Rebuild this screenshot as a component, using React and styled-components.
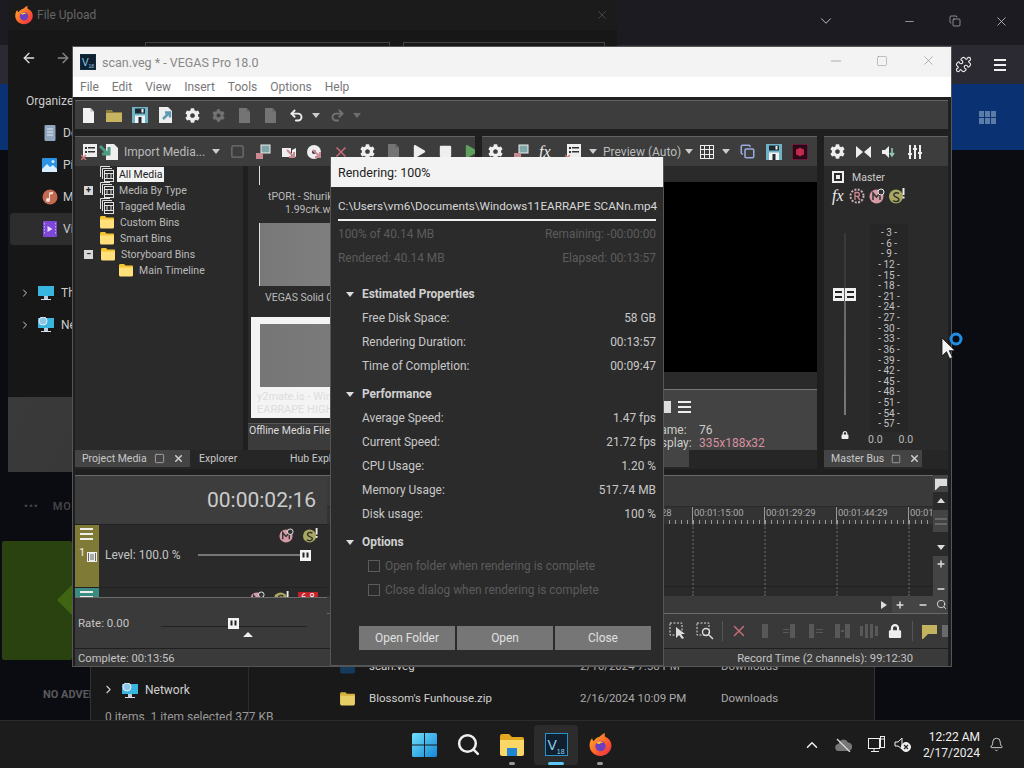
import React from "react";
import styled, { createGlobalStyle } from "styled-components";
import { FaCog, FaLock, FaPlay, FaStop } from "react-icons/fa";
import { Undo2, Redo2, X, Minus, Plus, Square, ChevronDown, ChevronUp, ChevronRight, ArrowLeft, ArrowRight, Bell, Search, Copy, Puzzle } from "lucide-react";

const GlobalStyle = createGlobalStyle`
  html, body {
    margin: 0;
    background: #0a0c12;
    overflow: hidden;
  }
  * {
    box-sizing: border-box;
  }
`;

/* little drawings */
const FirefoxIcon = ({ size = 20 }) => (
  <svg width={size} height={size} viewBox="0 0 24 24">
    <defs>
      <linearGradient id="ff" x1="0" y1="0" x2="1" y2="1">
        <stop offset="0" stopColor="#ffb52e" />
        <stop offset="0.6" stopColor="#ff5a2b" />
        <stop offset="1" stopColor="#e6274f" />
      </linearGradient>
    </defs>
    <path d="M12 23C6 23 1.500 18.500 1.500 13c0-3 1-5.500 2.500-7 .2 1.400.8 2.200 1.600 2.800C6.600 6.500 9 5 11 4.600 13 2.800 15 1.500 16.500 1c-.6 1.400-.6 2.600 0 3.500 3.700 1.600 6 4.600 6 8.500 0 5.500-4.500 10-10.500 10z" fill="url(#ff)" />
    <circle cx="12" cy="13.500" r="5" fill="#6a3fc0" />
    <path d="M8 10c2-1.500 5-1.500 7 .5-1.500-.3-3 0-4 1-1 .4-2-.3-3-1.500z" fill="#ffb52e" />
  </svg>
);

const FolderIcon = ({ size = 16, top = "#f4c430", body = "#ffe07a" }) => (
  <svg width={size} height={size} viewBox="0 0 16 16">
    <path d="M1 3.500 C1 2.500 1.500 2 2.500 2 H6 L7.500 3.500 H14 C14.700 3.500 15 4 15 4.500 V6 H1z" fill={top} />
    <path d="M1 5.500 H15 V13 C15 13.800 14.500 14.500 13.500 14.500 H2.500 C1.500 14.500 1 13.800 1 13z" fill={body} />
  </svg>
);

const LibraryIcon = ({ kind }) => (
  <svg width="16" height="16" viewBox="0 0 16 16">
    {kind === "doc" && (
      <g>
        <rect x="2.500" y="0" width="11" height="16" rx="1" fill="#8fa6be" />
        <path d="M5 4h6M5 7h6M5 10h6" stroke="#e4ecf4" strokeWidth="1" />
      </g>
    )}
    {kind === "pic" && (
      <g>
        <rect x="0" y="1" width="15" height="14" rx="1" fill="#2a93e6" />
        <path d="M0 12l5-5 3 3 3-2 4 4v3H0z" fill="#d6eeff" />
        <circle cx="11" cy="4.500" r="1.500" fill="#d6eeff" />
      </g>
    )}
    {kind === "music" && (
      <g>
        <circle cx="8" cy="8" r="7.500" fill="#c46a50" />
        <path d="M7 3.500l4-.5v2l-3 .4V11a2 2 0 1 1-1-1.700z" fill="#f2e2dc" />
      </g>
    )}
    {kind === "video" && (
      <g>
        <rect x="1" y="0" width="14" height="16" rx="1" fill="#7d48d6" />
        <path d="M5.500 5v6l5-3z" fill="#eadcff" />
        <path d="M2.500 2v12M13.500 2v12" stroke="#c6a6ff" strokeDasharray="1.500 1.500" />
      </g>
    )}
  </svg>
);

const BinIcon = () => (
  <svg width="14" height="16" viewBox="0 0 14 16" fill="none" stroke="#e2e2e2" strokeWidth="1">
    <path d="M.500 11V.500H10" />
    <path d="M2.500 13V2.500H12" />
    <rect x="4.500" y="4.500" width="9" height="11" fill="#2a2a2a" />
    <path d="M4.500 7.500h9M4.500 12.500h9M7 8v4M11 8v4" />
  </svg>
);

const NewDocIcon = () => (
  <svg width="13" height="15" viewBox="0 0 13 15">
    <path d="M1 0h7.500L12 3.500V15H1z" fill="#f2f2f2" />
    <path d="M8.500 0v3.500H12" fill="#bbb" />
  </svg>
);

const OpenFolderIcon = () => (
  <svg width="16" height="13" viewBox="0 0 16 13">
    <path d="M0 1h6l1 2h9v10H0z" fill="#8d7f3f" />
    <path d="M0 4h16v9H0z" fill="#c7b463" />
  </svg>
);

const FloppyIcon = () => (
  <svg width="16" height="16" viewBox="0 0 16 16">
    <rect width="16" height="16" fill="#6fb3c6" />
    <rect x="3" y="1.500" width="10" height="5" fill="#1e2a30" />
    <rect x="9.500" y="2" width="2" height="3.500" fill="#f2f2f2" />
    <rect x="3" y="8.500" width="10" height="7.500" fill="#f2f2f2" />
    <rect x="6.500" y="10" width="3" height="6" fill="#1e2a30" />
  </svg>
);

const ExportIcon = () => (
  <svg width="16" height="16" viewBox="0 0 16 16">
    <path d="M1 0h9l4 4v12H1z" fill="#eee" />
    <path d="M5 12l6-6M7 5.500h5v5" stroke="#5b9ab0" strokeWidth="2.500" fill="none" />
  </svg>
);

const PropsIcon = () => (
  <svg width="16" height="16" viewBox="0 0 16 16">
    <rect x="2" y="0" width="14" height="13" fill="#eee" />
    <path d="M4 3h2v2H4zM7 3h7v1.500H7zM4 7h2v2H4zM7 7h7v1.500H7z" fill="#333" />
    <path d="M0 11l5 5M5 11l-5 5" stroke="#c77" strokeWidth="1.500" />
  </svg>
);

const ImportIcon = () => (
  <svg width="20" height="18" viewBox="0 0 20 18">
    <path d="M7 1h8l4 4v12H7z" fill="#eee" />
    <path d="M1 3l9 9M3 11h7V4" stroke="#4f9a85" strokeWidth="3" fill="none" />
  </svg>
);

const PinkTileIcon = ({ variant }) => (
  <svg width="16" height="16" viewBox="0 0 16 16">
    {variant === "a" && <rect x="6" y="1" width="9" height="8" fill="#7fa6a8" stroke="#eee" />}
    {variant === "a" && <rect x="1" y="9" width="7" height="6" fill="#c98a92" />}
    {variant === "b" && <path d="M1 4h9v9H1zM11 6l4-2v9l-4-2z" fill="#eee" />}
    {variant === "c" && <circle cx="7" cy="8" r="7" fill="#eee" />}
    {variant === "c" && <circle cx="7" cy="8" r="2" fill="#333" />}
    {variant !== "a" && <path d="M6 6l7 7M13 8v5H8" stroke="#c98a92" strokeWidth="2" fill="none" />}
  </svg>
);

const RedRecordIcon = () => (
  <svg width="16" height="16" viewBox="0 0 16 16">
    <rect width="16" height="16" fill="#2a0a18" stroke="#a0304f" />
    <path d="M8 3.500l4 2.200v4.600l-4 2.200-4-2.200V5.700z" fill="#c2294e" />
  </svg>
);

const MuteBadge = ({ size = 16 }) => (
  <svg width={size} height={size} viewBox="0 0 16 16">
    <circle cx="7.500" cy="8.500" r="7" fill="#d69aa6" />
    <path d="M4 12V5l3.500 4L11 5v7" stroke="#333" strokeWidth="1.500" fill="none" />
    <circle cx="12" cy="4" r="3" fill="#333" stroke="#eee" />
  </svg>
);

const SoloBadge = ({ size = 16 }) => (
  <svg width={size} height={size} viewBox="0 0 16 16">
    <circle cx="7" cy="8.500" r="7" fill="#a9a860" />
    <path d="M10 5.500C8 4 4 5 5 7.500s5 1.500 5 4-4 2.500-6 1" stroke="#333" strokeWidth="1.500" fill="none" />
    <rect x="13.500" y="0" width="2" height="7" fill="#eee" />
    <rect x="13.500" y="8.500" width="2" height="2" fill="#eee" />
  </svg>
);

const FxBadge = () => (
  <svg width="16" height="16" viewBox="0 0 16 16">
    <circle cx="8" cy="8" r="6.500" fill="none" stroke="#c9aeb4" strokeWidth="2" strokeDasharray="2 1.400" />
    <path d="M6 12V4.500h2.500a1.800 1.800 0 0 1 0 3.800H6M8.500 8.500L11 12" stroke="#c98a92" strokeWidth="1.300" fill="none" />
  </svg>
);

const MasterSquare = () => (
  <svg width="12" height="12" viewBox="0 0 12 12">
    <path d="M0 0h12v12H0zM2 2v8h8V2z" fill="#eee" fillRule="evenodd" />
    <rect x="4" y="4" width="4" height="4" fill="#eee" />
  </svg>
);

const HamburgerIcon = ({ width = 13 }) => (
  <svg width={width} height="12" viewBox="0 0 13 12" preserveAspectRatio="none">
    <path d="M0 0h13v2H0zM0 5h13v2H0zM0 10h13v2H0z" fill="#eee" />
  </svg>
);

const SliderKnob = () => (
  <svg width="11" height="11" viewBox="0 0 11 11">
    <rect width="11" height="11" fill="#f4f4f4" />
    <rect x="2.500" y="2.500" width="2" height="5" fill="#222" />
    <rect x="6.500" y="2.500" width="2" height="5" fill="#222" />
  </svg>
);

const FilmIcon = () => (
  <svg width="10" height="10" viewBox="0 0 10 10">
    <rect width="10" height="10" fill="#eee" />
    <path d="M1.500 1v8M8.500 1v8M3 3h4M3 5h4M3 7h4" stroke="#666" strokeWidth="1" />
  </svg>
);

const BracketIcon = ({ kind }) => (
  <svg width="22" height="18" viewBox="0 0 22 18" opacity="0.28" fill="#aaa">
    {kind === 0 && <path d="M8 2h6v14H8z" />}
    {kind === 1 && <path d="M10 2h5v14h-5zM3 7h6v1H3zM3 10h6v1H3z" />}
    {kind === 2 && <path d="M3 2h5v14H3zM10 7h7v1h-7zM10 10h7v1h-7z" />}
    {kind === 3 && <path d="M3 2h5v14H3zM13 2h5v14h-5zM9 8h3v2H9z" />}
    {kind === 4 && <path d="M2 4h3v10H2zM7 2h3v14H7zM12 2h3v14h-3zM17 4h3v10h-3z" />}
  </svg>
);

const SelectionIcon = ({ zoom }) => (
  <svg width="18" height="18" viewBox="0 0 18 18" fill="none">
    <rect x="1" y="1" width="12" height="12" stroke="#ddd" strokeDasharray="2 1.500" />
    {zoom ? (
      <g stroke="#ddd" strokeWidth="1.400">
        <circle cx="10" cy="10" r="3.500" />
        <path d="M13 13l4 4" />
      </g>
    ) : (
      <path d="M7 5v11l3-3 3 4 2-1-3-4h4z" fill="#ddd" />
    )}
  </svg>
);

const NoteIcon = ({ size = 15, fill = "#c4b35e" }) => (
  <svg width={size} height={size} viewBox="0 0 15 15">
    <path d="M0 1h15v9H6l-5 5H0z" fill={fill} />
  </svg>
);

const WindowsLogo = () => (
  <svg width="25" height="24" viewBox="0 0 25 24">
    <defs>
      <linearGradient id="win" x1="0" y1="0" x2="1" y2="1">
        <stop offset="0" stopColor="#6fe0fa" />
        <stop offset="1" stopColor="#1387d8" />
      </linearGradient>
    </defs>
    <path d="M0 1.500A1.500 1.500 0 0 1 1.500 0H12v11.500H0zM13 0h10.500A1.500 1.500 0 0 1 25 1.500v10H13zM0 12.500h12V24H1.500A1.500 1.500 0 0 1 0 22.500zM13 12.500h12v10a1.500 1.500 0 0 1-1.500 1.500H13z" fill="url(#win)" />
  </svg>
);

const ExplorerTaskIcon = () => (
  <svg width="24" height="22" viewBox="0 0 24 22">
    <path d="M0 2a2 2 0 0 1 2-2h7l3 3h10a2 2 0 0 1 2 2v3H0z" fill="#e2a81f" />
    <path d="M0 6h24v14a2 2 0 0 1-2 2H2a2 2 0 0 1-2-2z" fill="#fad766" />
    <rect x="7" y="14" width="10" height="8" fill="#1f86d6" />
  </svg>
);

const VegasLogo = ({ size, frame = "#2b8fc9" }) => (
  <LogoBox $size={size} $frame={frame}>
    V<small>18</small>
  </LogoBox>
);

const MonitorIcon = ({ globe }) => (
  <svg width="16" height="16" viewBox="0 0 16 16">
    <rect x="0" y="1" width="16" height="10" fill="#39b6e0" />
    <rect x="6" y="11" width="4" height="3" fill="#bcd" />
    <rect x="3" y="14" width="10" height="1" fill="#dde" />
    {globe && <circle cx="5" cy="4" r="4" fill="#8fc3e8" stroke="#e5eef5" />}
  </svg>
);

const CursorBusy = () => (
  <svg width="26" height="32" viewBox="0 0 26 32">
    <path d="M2 10v18l4.500-4.300 3.200 7 2.800-1.200-3.200-6.800H15z" fill="#f4f4f4" stroke="#111" strokeWidth="0.800" />
    <circle cx="16" cy="11" r="5" fill="none" stroke="#1f8fe6" strokeWidth="3" />
  </svg>
);

/* desktop and windows placed on it */
const Desktop = styled.div`
  position: relative;
  width: 1024px;
  height: 768px;
  overflow: hidden;
  background: #0a0c12;
  font-family: Roboto, "Liberation Sans", sans-serif;
  font-size: 12px;
  color: #ccc;
`;

const Win = styled.div`
  position: absolute;
  left: ${(p) => p.$x}px;
  top: ${(p) => p.$y}px;
  width: ${(p) => p.$w}px;
  height: ${(p) => p.$h}px;
  display: flex;
  flex-direction: column;
  overflow: hidden;
`;

const LogoBox = styled.span`
  display: inline-flex;
  align-items: center;
  justify-content: center;
  flex: none;
  width: ${(p) => p.$size}px;
  height: ${(p) => p.$size}px;
  background: #10202f;
  border: 1px solid ${(p) => p.$frame};
  color: #8fd0f0;
  font-family: "Liberation Sans", sans-serif;
  font-size: ${(p) => Math.round(p.$size * 0.62)}px;
  small {
    font-size: ${(p) => Math.round(p.$size * 0.3)}px;
    align-self: flex-end;
  }
`;

/* firefox window in the back */
const BrowserTop = styled.div`
  height: 45px;
  background: #1c1b22;
  display: flex;
  align-items: center;
  justify-content: flex-end;
  color: #d4d4d8;
`;

const CaptionSlot = styled.span`
  width: 46px;
  margin-right: ${(p) => p.$gap || 0}px;
  display: flex;
  justify-content: center;
  margin-top: -3px;
`;

const BrowserNav = styled.div`
  height: 39px;
  background: #2b2a33;
  display: flex;
  align-items: center;
  justify-content: flex-end;
  gap: 22px;
  padding-right: 18px;
  color: #e8e8e8;
`;

const BlueBand = styled.div`
  height: 66px;
  background: #0a3272;
  display: flex;
  align-items: center;
  justify-content: flex-end;
  padding-right: 28px;
`;

const TileGrid = styled.div`
  display: grid;
  grid-template-columns: repeat(3, 5px);
  grid-auto-rows: 6px;
  gap: 1px;
  span {
    background: #5c7ca8;
  }
`;

const PageBody = styled.div`
  flex: 1;
  padding-top: 350px;
  display: flex;
  flex-direction: column;
  color: #444;
`;

const MoreRow = styled.div`
  display: flex;
  gap: 14px;
  padding-left: 24px;
  font-size: 11px;
  height: 41px;
  font-weight: 600;
  letter-spacing: 1px;
`;

const AdBox = styled.div`
  width: 70px;
  height: 119px;
  margin-left: 2px;
  background: #2a4110;
  border-radius: 2px;
  position: relative;
  flex: none;
  &::after {
    content: "";
    position: absolute;
    right: 0;
    top: 44px;
    border: 15px solid transparent;
    border-right-color: #3f6412;
  }
`;

const NoAds = styled.div`
  margin: 28px 0 0 43px;
  font-weight: 700;
  font-size: 11px;
  color: #5a5a5a;
  white-space: nowrap;
`;

/* file upload dialog */
const UploadHead = styled.div`
  height: 30px;
  display: flex;
  align-items: center;
  padding: 0 8px 0 6px;
  gap: 3px;
  color: #666;
  background: #1b1b1b;
  span {
    flex: 1;
  }
`;

const UploadBody = styled.div`
  flex: 1;
  display: flex;
  flex-direction: column;
  background: #171717;
  color: #ccc;
`;

const UploadNav = styled.div`
  height: 34px;
  display: flex;
  align-items: flex-start;
  position: relative;
  gap: 18px;
  padding: 20px 0 0 13px;
  color: #ddd;
`;

const AddressBox = styled.div`
  position: absolute;
  top: 12px;
  left: ${(p) => p.$x}px;
  width: ${(p) => p.$w}px;
  height: 30px;
  border: 1px solid #444;
`;

const OrganizeRow = styled.div`
  height: 53px;
  padding: 30px 0 0 18px;
`;

const SideRow = styled.div`
  height: 32px;
  margin: 0 0 0 2px;
  padding-left: ${(p) => p.$indent || 32}px;
  display: flex;
  align-items: center;
  gap: ${(p) => p.$gap || 5}px;
  white-space: nowrap;
  background: ${(p) => (p.$on ? "#2d2d2d" : "transparent")};
  border-radius: 3px;
`;

const SideGap = styled.div`
  height: ${(p) => p.$h}px;
  flex: none;
`;

const UploadFoot = styled.div`
  flex: 1;
  background: linear-gradient(120deg, #3a3a3a, #2e2e2e);
`;

/* explorer strip under the editor */
const ExplorerWin = styled(Win)`
  flex-direction: row;
  background: #191919;
  border-left: 1px solid #333;
  border-right: 1px solid #333;
  color: #d0d0d0;
`;

const ExplorerSide = styled.div`
  width: 158px;
  flex: none;
  border-right: 1px solid #2c2c2c;
  padding: 211px 0 0 11px;
  display: flex;
  align-items: flex-start;
  gap: 7px;
  font-size: 12px;
  line-height: 15px;
`;

const ExplorerList = styled.div`
  flex: 1;
  padding: 178px 0 0 90px;
`;

const FileRow = styled.div`
  height: 32px;
  display: grid;
  grid-template-columns: 30px 211px 141px 1fr;
  align-items: center;
  font-size: 11.500px;
  span:nth-child(n + 3) {
    color: #aaa;
  }
`;

const ExplorerStatus = styled.div`
  position: absolute;
  left: 14px;
  bottom: -5px;
  color: #999;
`;

/* vegas */
const VegasWin = styled(Win)`
  background: #222;
  border: 1px solid #555;
`;

const TitleBar = styled.div`
  height: 30px;
  background: #f3f3f3;
  display: flex;
  align-items: center;
  padding-left: 7px;
  color: #888;
  font-size: 12.500px;
`;

const TitleText = styled.span`
  flex: 1;
  margin-left: 6px;
`;

const TitleBtn = styled.div`
  width: 46px;
  display: flex;
  justify-content: center;
  margin-top: -3px;
  color: #888;
`;

const MenuBar = styled.div`
  height: 20px;
  background: #fff;
  display: flex;
  align-items: center;
  gap: 13px;
  padding-left: 7px;
  color: #777;
`;

const Workspace = styled.div`
  flex: 1;
  display: flex;
  flex-direction: column;
  padding: 3px 3px 0 2px;
  background: #1f1f1f;
  min-height: 0;
`;

const Toolbar = styled.div`
  height: ${(p) => p.$h || 30}px;
  background: #3d3d3d;
  border-top: 1px solid #626262;
  display: flex;
  align-items: center;
  flex: none;
  padding-left: ${(p) => p.$pad || 0}px;
  color: #ddd;
  overflow: hidden;
  white-space: nowrap;
`;

const ToolSlot = styled.span`
  flex: none;
  width: ${(p) => p.$w || 26}px;
  display: flex;
  justify-content: center;
  align-items: center;
  opacity: ${(p) => (p.$dim ? 0.3 : 1)};
  color: ${(p) => p.$color || "#eee"};
`;

const Caret = styled.span`
  flex: none;
  width: ${(p) => p.$w || 20}px;
  display: flex;
  justify-content: center;
  opacity: ${(p) => (p.$dim ? 0.35 : 1)};
  &::before {
    content: "";
    border: 4px solid transparent;
    border-top: 5px solid #ccc;
    border-bottom: 0;
  }
`;

const ToolText = styled.span`
  flex: none;
  width: ${(p) => p.$w}px;
  margin-left: ${(p) => p.$left || 0}px;
  color: #bbb;
  font-size: 12px;
`;

const DockRow = styled.div`
  display: flex;
  gap: 7px;
  height: 333px;
  margin-top: 7px;
  flex: none;
`;

const Panel = styled.div`
  width: ${(p) => p.$w}px;
  flex: none;
  display: flex;
  flex-direction: column;
`;

const PanelBody = styled.div`
  height: 284px;
  display: flex;
  background: #2a2a2a;
  overflow: hidden;
  flex: none;
`;

const TabStrip = styled.div`
  height: 19px;
  display: flex;
  align-items: stretch;
  background: #262626;
  color: #c8c8c8;
  font-size: 10.500px;
`;

const Tab = styled.div`
  width: ${(p) => p.$w}px;
  padding-left: ${(p) => p.$pad || 7}px;
  background: ${(p) => (p.$on ? "#444" : "transparent")};
  display: flex;
  align-items: center;
  gap: 8px;
  white-space: nowrap;
  height: 17px;
  span {
    flex: none;
    width: ${(p) => p.$label || "auto"}px;
  }
`;

const TreePane = styled.div`
  width: 168px;
  flex: none;
  font-size: 10.500px;
`;

const TreeRow = styled.div`
  height: 16px;
  display: flex;
  align-items: center;
  padding-left: ${(p) => p.$indent || 9}px;
  color: #bbb;
  gap: 3px;
`;

const Expander = styled.span`
  width: 9px;
  height: 9px;
  background: #d8d8d8;
  color: #222;
  font-size: 9px;
  line-height: 9px;
  text-align: center;
  font-weight: 700;
  margin-right: 4px;
  flex: none;
`;

const TreeLabel = styled.span`
  padding: 0 2px;
  line-height: 15px;
  background: ${(p) => (p.$on ? "#f3f3f3" : "transparent")};
  color: ${(p) => (p.$on ? "#222" : "#bbb")};
`;

const Splitter = styled.div`
  width: 5px;
  background: #1f1f1f;
  flex: none;
`;

const ThumbPane = styled.div`
  flex: 1;
  display: flex;
  flex-direction: column;
  min-width: 0;
  color: #bbb;
  white-space: nowrap;
  font-size: 10.500px;
`;

const ThumbStub = styled.div`
  margin-left: 11px;
  height: 19px;
  border-left: 1px solid #ddd;
`;

const ThumbCaption = styled.div`
  padding-left: ${(p) => p.$indent}px;
  line-height: 13px;
`;

const ThumbShot = styled.div`
  margin: ${(p) => p.$top}px 0 0 11px;
  height: 63px;
  border-left: 1px solid #ddd;
  background: linear-gradient(90deg, #787878, #8d8d8d);
`;

const ThumbCard = styled.div`
  margin: 13px 0 0 3px;
  height: 101px;
  background: #f4f4f4;
  padding: 7px 0 0 9px;
  color: #ddd;
  font-size: 11px;
  line-height: 13px;
  flex: none;
  div {
    height: 63px;
    background: linear-gradient(90deg, #767676, #828282);
    margin-bottom: 3px;
  }
  p {
    margin: 0 0 0 -3px;
  }
`;

const SelectedCaption = styled.div`
  margin-top: 5px;
  flex: 1;
  line-height: 13px;
  background: #3b3b3b;
  border-top: 1px solid #555;
  color: #ddd;
  padding-left: 1px;
`;

const PreviewBody = styled(PanelBody)`
  flex-direction: column;
  padding-top: 16px;
`;

const VideoArea = styled.div`
  height: 190px;
  background: #000;
  flex: none;
`;

const InfoPanel = styled.div`
  margin-top: 17px;
  flex: 1;
  background: #434343;
  border-top: 1px solid #777;
  padding: 9px 0 0 168px;
`;

const InfoTools = styled.div`
  display: flex;
  align-items: center;
  gap: 7px;
  height: 15px;
  margin-bottom: 10px;
  padding-left: 14px;
`;

const WhiteBlock = styled.span`
  width: 7px;
  height: 12px;
  background: #ddd;
`;

const InfoRow = styled.div`
  display: flex;
  height: 13px;
  line-height: 13px;
  color: #ccc;
`;

const InfoLabel = styled.span`
  width: 49px;
`;

const InfoValue = styled.span`
  color: ${(p) => p.$color || "#ccc"};
`;

const MixerBody = styled(PanelBody)`
  flex-direction: column;
  padding: 3px 0 0 8px;
  font-size: 10.500px;
`;

const MixerRow = styled.div`
  height: ${(p) => p.$h}px;
  display: flex;
  align-items: center;
  gap: ${(p) => p.$gap}px;
  flex: none;
`;

const FxText = styled.span`
  font-family: "Liberation Serif", serif;
  font-style: italic;
  font-size: 16px;
  color: #eee;
  width: ${(p) => p.$w || 16}px;
`;

const StripRow = styled.div`
  display: flex;
  margin-top: 17px;
`;

const FaderCol = styled.div`
  width: 26px;
  position: relative;
  height: 216px;
  display: flex;
  flex-direction: column;
  align-items: center;
  padding-top: 9px;
  flex: none;
`;

const FaderTrack = styled.div`
  width: 2px;
  height: 182px;
  flex: none;
  background: linear-gradient(#3a3a3a 0, #3a3a3a 30%, #666 31%, #777 100%);
`;

const FaderHandle = styled.div`
  position: absolute;
  top: 64px;
  left: 1px;
  display: flex;
  gap: 1px;
  span {
    width: 11px;
    height: 13px;
    background: #f0f0f0;
    position: relative;
  }
  span::after {
    content: "";
    position: absolute;
    left: 2px;
    right: 2px;
    top: 3px;
    bottom: 3px;
    border-top: 2px solid #222;
    border-bottom: 2px solid #222;
  }
`;

const LockSlot = styled.div`
  margin-top: 16px;
  color: #eee;
  line-height: 0;
`;

const MeterStrip = styled.div`
  width: 38px;
  margin-left: 12px;
  height: 208px;
  background: #262626;
  padding-top: 4px;
  display: flex;
  flex-direction: column;
  align-items: center;
  font-size: 10px;
  color: #c4c4c4;
  flex: none;
`;

const MeterTick = styled.span`
  height: 10.630px;
  line-height: 10.630px;
  white-space: nowrap;
`;

const PeakRow = styled.div`
  display: flex;
  gap: 16px;
  margin-left: 36px;
  margin-top: -7px;
  font-size: 10.500px;
  color: #bbb;
`;

const Timeline = styled.div`
  margin-top: 6px;
  height: 174px;
  display: flex;
  flex: none;
`;

const TrackList = styled.div`
  width: 252px;
  flex: none;
  display: flex;
  flex-direction: column;
`;

const TimeHeader = styled.div`
  height: 49px;
  background: #3d3d3d;
  border-top: 1px solid #6a6a6a;
  display: flex;
  align-items: center;
  justify-content: flex-end;
  padding: 0 11px 0 0;
  font-size: 21px;
  color: #ccc;
`;

const TrackRow = styled.div`
  height: ${(p) => p.$h}px;
  display: flex;
  background: #2a2a2a;
  overflow: hidden;
  flex: none;
  border-top: 1px solid #222;
`;

const TrackTab = styled.div`
  width: 24px;
  flex: none;
  background: ${(p) => p.$color};
  padding: 3px 0 0 5px;
  color: #eee;
  position: relative;
  font-size: 11px;
`;

const TrackNo = styled.div`
  display: flex;
  align-items: flex-start;
  gap: 2px;
  margin-top: 4px;
  margin-left: -1px;
  line-height: 12px;
  svg {
    margin-top: 5px;
  }
`;

const TrackMain = styled.div`
  flex: 1;
  padding: 2px 9px 0 6px;
  display: flex;
  flex-direction: column;
`;

const TrackBadges = styled.div`
  display: flex;
  justify-content: flex-end;
  gap: 9px;
  height: 16px;
  align-items: center;
  flex: none;
`;

const LevelRow = styled.div`
  display: flex;
  align-items: center;
  margin-top: 5px;
  color: #c4c4c4;
  font-size: 12px;
  white-space: nowrap;
`;

const LevelLine = styled.div`
  width: 102px;
  height: 2px;
  background: #777;
  margin-left: 17px;
`;

const RedChip = styled.span`
  background: #c8202a;
  color: #eee;
  font-size: 10px;
  padding: 0 3px;
  margin-top: -2px;
`;

const RatePanel = styled.div`
  flex: 1;
  background: #3a3a3a;
  border-top: 1px solid #6a6a6a;
  padding-left: 3px;
  display: flex;
  align-items: center;
  position: relative;
  color: #c4c4c4;
  font-size: 11.500px;
  margin-bottom: 1px;
  white-space: nowrap;
`;

const RateTrack = styled.div`
  width: 146px;
  height: 1px;
  margin: 6px 0 0 32px;
  background: #222;
  position: relative;
  flex: none;
  svg {
    position: absolute;
    left: 67px;
    top: -8px;
  }
  &::after {
    content: "";
    position: absolute;
    left: 82px;
    top: 6px;
    border: 5px solid transparent;
    border-top: 0;
    border-bottom: 5px solid #eee;
  }
`;

const TrackView = styled.div`
  flex: 1;
  min-width: 0;
  display: flex;
  flex-direction: column;
`;

const TrackViewTop = styled.div`
  height: 121px;
  display: flex;
  flex: none;
`;

const TrackViewMain = styled.div`
  flex: 1;
  min-width: 0;
  display: flex;
  flex-direction: column;
  background: #2a2a2a;
`;

const MarkerBar = styled.div`
  height: 31px;
  background: #3a3a3a;
  border-top: 1px solid #6a6a6a;
  flex: none;
`;

const Ruler = styled.div`
  height: 18px;
  flex: none;
  display: flex;
  justify-content: flex-end;
  background: #333;
  border-top: 1px solid #2a2a2a;
`;

const RulerMark = styled.div`
  width: ${(p) => p.$w}px;
  flex: none;
  border-left: 1px solid #999;
  padding-left: 1px;
  font-size: 9.500px;
  line-height: 12px;
  color: #aaa;
  white-space: nowrap;
  overflow: hidden;
  background: repeating-linear-gradient(90deg, #999 0 1px, transparent 1px 6px) 0 100% / 100% 4px no-repeat;
`;

const TrackLanes = styled.div`
  flex: 1;
  display: flex;
  justify-content: flex-end;
  position: relative;
  background: #2a2a2a;
  &::after {
    content: "";
    position: absolute;
    left: 0;
    right: 0;
    top: 62px;
    border-top: 1px solid #222;
  }
`;

const Lane = styled.div`
  width: ${(p) => p.$w}px;
  flex: none;
  border-left: 2px dotted #4c4c4c;
`;

const VScroll = styled.div`
  width: 15px;
  flex: none;
  background: #2a2a2a;
  display: flex;
  flex-direction: column;
  align-items: center;
  color: #ddd;
`;

const VCell = styled.div`
  width: 15px;
  height: ${(p) => p.$h}px;
  margin-top: ${(p) => p.$top || 0}px;
  padding: ${(p) => p.$pad || "0"};
  background: ${(p) => p.$bg || "transparent"};
  display: flex;
  flex-direction: column;
  align-items: center;
  justify-content: ${(p) => p.$justify || "center"};
  flex: none;
`;

const UpTri = styled.span`
  border: 4px solid transparent;
  border-top: 0;
  border-bottom: 5px solid #ddd;
`;

const DownTri = styled.span`
  border: 4px solid transparent;
  border-bottom: 0;
  border-top: 5px solid #ddd;
`;

const RightTri = styled.span`
  border: 4px solid transparent;
  border-right: 0;
  border-left: 6px solid #ddd;
  margin: 0 5px 0 6px;
`;

const ThumbGrip = styled.div`
  width: 12px;
  border-top: 2px solid #666;
  border-bottom: 2px solid #666;
  height: 7px;
`;

const HScroll = styled.div`
  height: 17px;
  background: #3a3a3a;
  display: flex;
  justify-content: flex-end;
  align-items: center;
  color: #ddd;
  flex: none;
`;

const HTools = styled.div`
  display: flex;
  align-items: center;
  gap: 13px;
  height: 17px;
  width: 56px;
  padding-left: 3px;
  background: #444;
  svg:last-child {
    margin-left: -5px;
  }
`;

const BottomTools = styled.div`
  flex: 1;
  background: #393939;
  border-top: 1px solid #6a6a6a;
  display: flex;
  align-items: center;
  justify-content: flex-end;
  margin-bottom: 1px;
  overflow: hidden;
`;

const ToolSep = styled.span`
  width: 1px;
  height: 20px;
  background: #555;
  margin: 0 ${(p) => p.$m}px;
  flex: none;
`;

const StatusBar = styled.div`
  height: 19px;
  background: #3a3a3a;
  display: flex;
  align-items: center;
  justify-content: space-between;
  padding: 0 35px 0 3px;
  color: #c4c4c4;
  flex: none;
  font-size: 11.200px;
`;

/* render dialog */
const RenderWin = styled(Win)`
  background: #2b2b2b;
  border: 1px solid #555;
  border-top: 0;
  font-size: 11.900px;
`;

const RenderHead = styled.div`
  height: 30px;
  background: #f3f3f3;
  padding-left: 7px;
  display: flex;
  align-items: center;
  color: #222;
  font-size: 12.500px;
  flex: none;
`;

const RenderBody = styled.div`
  flex: 1;
  padding: 11px 7px 0;
  display: flex;
  flex-direction: column;
`;

const PathLine = styled.div`
  height: 23px;
  flex: none;
  line-height: 17px;
  white-space: nowrap;
  font-size: 11.700px;
  color: #d8d8d8;
  border-bottom: 2px solid #f0f0f0;
`;

const StatStack = styled.div`
  margin-top: 1px;
`;

const StatLine = styled.div`
  display: flex;
  justify-content: space-between;
  height: 24px;
  align-items: center;
  color: #5c5c5c;
`;

const Section = styled.div`
  margin-top: ${(p) => p.$top}px;
`;

const SectionHead = styled.div`
  height: 24px;
  display: flex;
  align-items: center;
  padding-left: 8px;
  gap: 8px;
  font-weight: 700;
  color: #d0d0d0;
  &::before {
    content: "";
    border: 4px solid transparent;
    border-top: 5px solid #ddd;
    border-bottom: 0;
  }
`;

const PropRow = styled.div`
  height: 24px;
  display: flex;
  align-items: center;
  justify-content: space-between;
  padding-left: 24px;
  color: #c8c8c8;
`;

const CheckRow = styled.label`
  height: 24px;
  display: flex;
  align-items: center;
  gap: 5px;
  padding-left: 30px;
  color: #5c5c5c;
`;

const CheckBox = styled.span`
  width: 12px;
  height: 12px;
  border: 1px solid #5c5c5c;
`;

const ButtonRow = styled.div`
  display: flex;
  gap: 2px;
  margin: 24px 0 0 21px;
`;

const RenderButton = styled.button`
  width: 96px;
  height: 24px;
  background: #767676;
  border: 0;
  color: #e0e0e0;
  font: inherit;
  padding: 0;
`;

/* taskbar */
const Taskbar = styled(Win)`
  flex-direction: row;
  align-items: center;
  background: #1c1c1c;
  border-top: 1px solid #2b2b2b;
  padding-left: 402px;
  color: #eee;
`;

const TaskSlot = styled.div`
  position: relative;
  width: 44px;
  height: 40px;
  display: flex;
  align-items: center;
  justify-content: center;
  background: ${(p) => (p.$on ? "#2c2c2c" : "transparent")};
  border-radius: 4px;
  &::after {
    content: "";
    display: ${(p) => (p.$mark ? "block" : "none")};
    position: absolute;
    bottom: 0;
    left: 50%;
    transform: translateX(-50%);
    width: ${(p) => (p.$on ? 16 : 6)}px;
    height: 3px;
    border-radius: 2px;
    background: ${(p) => (p.$on ? "#5cc6f5" : "#9a9a9a")};
  }
`;

const Tray = styled.div`
  margin-left: auto;
  display: flex;
  align-items: center;
  color: #eee;
  padding-right: 12px;
`;

const TraySlot = styled.span`
  width: ${(p) => p.$w}px;
  display: flex;
  justify-content: center;
`;

const Clock = styled.div`
  width: 64px;
  margin-left: 3px;
  text-align: right;
  line-height: 16px;
  font-size: 12px;
  color: #eee;
`;

const CursorMark = styled.div`
  position: absolute;
  left: 940px;
  top: 328px;
  line-height: 0;
`;

const meterScale = [3, 6, 9, 12, 15, 18, 21, 24, 27, 30, 33, 36, 39, 42, 45, 48, 51, 54, 57];

const treeItems = [
  { label: "All Media", icon: "bin", on: true, indent: 25 },
  { label: "Media By Type", icon: "bin", exp: "+" },
  { label: "Tagged Media", icon: "bin", indent: 25 },
  { label: "Custom Bins", icon: "folder", indent: 24 },
  { label: "Smart Bins", icon: "folder", indent: 24 },
  { label: "Storyboard Bins", icon: "folder", exp: "−" },
  { label: "Main Timeline", icon: "folder", indent: 43 },
];

const stats = [
  ["100% of 40.14 MB", "Remaining: -00:00:00"],
  ["Rendered: 40.14 MB", "Elapsed: 00:13:57"],
];

const sections = [
  {
    title: "Estimated Properties",
    top: 12,
    rows: [
      ["Free Disk Space:", "58 GB"],
      ["Rendering Duration:", "00:13:57"],
      ["Time of Completion:", "00:09:47"],
    ],
  },
  {
    title: "Performance",
    top: 4,
    rows: [
      ["Average Speed:", "1.47 fps"],
      ["Current Speed:", "21.72 fps"],
      ["CPU Usage:", "1.20 %"],
      ["Memory Usage:", "517.74 MB"],
      ["Disk usage:", "100 %"],
    ],
  },
];

const rulerMarks = [
  ["00:01:00:28", 72],
  ["00:01:15:00", 72],
  ["00:01:29:29", 72],
  ["00:01:44:29", 72],
  ["00:01:59:29", 25],
];

const App = () => {
  return (
    <Desktop>
      <GlobalStyle />

      <Win $x={0} $y={0} $w={1024} $h={720}>
        <BrowserTop>
          <CaptionSlot $gap={37}>
            <ChevronDown size={18} strokeWidth={1.2} />
          </CaptionSlot>
          <CaptionSlot>
            <Minus size={13} strokeWidth={1.2} />
          </CaptionSlot>
          <CaptionSlot>
            <Copy size={12} strokeWidth={1.2} />
          </CaptionSlot>
          <CaptionSlot>
            <X size={15} strokeWidth={1.2} />
          </CaptionSlot>
        </BrowserTop>
        <BrowserNav>
          <Puzzle size={17} strokeWidth={1.6} />
          <HamburgerIcon width={12} />
        </BrowserNav>
        <BlueBand>
          <TileGrid>
            {[0, 1, 2, 3, 4, 5].map((n) => (
              <span key={n} />
            ))}
          </TileGrid>
        </BlueBand>
        <PageBody>
          <MoreRow>
            <span>•••</span>
            <span>MO</span>
          </MoreRow>
          <AdBox />
          <NoAds>NO ADVERTISEMENT</NoAds>
        </PageBody>
      </Win>

      <Win $x={8} $y={0} $w={609} $h={472}>
        <UploadHead>
          <FirefoxIcon size={20} />
          <span>File Upload</span>
          <X size={14} strokeWidth={1} />
        </UploadHead>
        <UploadBody>
          <UploadNav>
            <ArrowLeft size={16} />
            <ArrowRight size={16} color="#888" />
            <AddressBox $x={137} $w={245} />
            <AddressBox $x={395} $w={202} />
          </UploadNav>
          <OrganizeRow>Organize</OrganizeRow>
          <SideRow $indent={32}>
            <LibraryIcon kind="doc" />
            Documents
          </SideRow>
          <SideRow $indent={32}>
            <LibraryIcon kind="pic" />
            Pictures
          </SideRow>
          <SideRow $indent={32}>
            <LibraryIcon kind="music" />
            Music
          </SideRow>
          <SideRow $indent={32} $on>
            <LibraryIcon kind="video" />
            Videos
          </SideRow>
          <SideGap $h={32} />
          <SideRow $indent={9} $gap={7}>
            <ChevronRight size={12} />
            <MonitorIcon />
            This PC
          </SideRow>
          <SideRow $indent={9} $gap={7}>
            <ChevronRight size={12} />
            <MonitorIcon globe />
            Network
          </SideRow>
          <SideGap $h={56} />
          <UploadFoot />
        </UploadBody>
      </Win>

      <ExplorerWin $x={90} $y={472} $w={785} $h={248}>
        <ExplorerSide>
          <ChevronRight size={13} />
          <MonitorIcon globe />
          Network
          <ExplorerStatus>0 items&nbsp;&nbsp;1 item selected 377 KB</ExplorerStatus>
        </ExplorerSide>
        <ExplorerList>
          <FileRow>
            <FolderIcon size={17} top="#1f6fb5" body="#143a5c" />
            <span>scan.veg</span>
            <span>2/16/2024 7:58 PM</span>
            <span>Downloads</span>
          </FileRow>
          <FileRow>
            <FolderIcon size={17} top="#d6b23c" body="#e8cc66" />
            <span>Blossom's Funhouse.zip</span>
            <span>2/16/2024 10:09 PM</span>
            <span>Downloads</span>
          </FileRow>
        </ExplorerList>
      </ExplorerWin>

      <VegasWin $x={72} $y={46} $w={880} $h={621}>
        <TitleBar>
          <VegasLogo size={16} frame="#0e2e40" />
          <TitleText>scan.veg * - VEGAS Pro 18.0</TitleText>
          <TitleBtn>
            <Minus size={16} strokeWidth={1} />
          </TitleBtn>
          <TitleBtn>
            <Square size={12} strokeWidth={1} />
          </TitleBtn>
          <TitleBtn>
            <X size={15} strokeWidth={1} />
          </TitleBtn>
        </TitleBar>
        <MenuBar>
          {["File", "Edit", "View", "Insert", "Tools", "Options", "Help"].map((m) => (
            <span key={m}>{m}</span>
          ))}
        </MenuBar>
        <Workspace>
          <Toolbar $h={29}>
            <ToolSlot><NewDocIcon /></ToolSlot>
            <ToolSlot><OpenFolderIcon /></ToolSlot>
            <ToolSlot><FloppyIcon /></ToolSlot>
            <ToolSlot><ExportIcon /></ToolSlot>
            <ToolSlot><FaCog size={15} /></ToolSlot>
            <ToolSlot $dim><FaCog size={13} /></ToolSlot>
            <ToolSlot $dim><NewDocIcon /></ToolSlot>
            <ToolSlot $dim><NewDocIcon /></ToolSlot>
            <ToolSlot><Undo2 size={15} strokeWidth={3} /></ToolSlot>
            <Caret $w={14} />
            <ToolSlot $w={28} $dim><Redo2 size={15} strokeWidth={3} /></ToolSlot>
            <Caret $w={12} $dim />
          </Toolbar>

          <DockRow>
            <Panel $w={400}>
              <Toolbar $pad={5}>
                <ToolSlot $w={18}><PropsIcon /></ToolSlot>
                <ToolSlot $w={22}><ImportIcon /></ToolSlot>
                <ToolSlot $w={4} />
                <ToolText $w={82}>Import Media...</ToolText>
                <Caret />
                <ToolSlot $w={22} $dim><Square size={15} /></ToolSlot>
                <ToolSlot $w={2} />
                <ToolSlot><PinkTileIcon variant="a" /></ToolSlot>
                <ToolSlot><PinkTileIcon variant="b" /></ToolSlot>
                <ToolSlot><PinkTileIcon variant="c" /></ToolSlot>
                <ToolSlot $color="#c06b78"><X size={16} strokeWidth={2.5} /></ToolSlot>
                <ToolSlot><FaCog size={15} /></ToolSlot>
                <ToolSlot $dim><NewDocIcon /></ToolSlot>
                <ToolSlot><FaPlay size={13} /></ToolSlot>
                <ToolSlot><FaStop size={13} /></ToolSlot>
                <ToolSlot $color="#5fa05f"><FaPlay size={13} /></ToolSlot>
              </Toolbar>
              <PanelBody>
                <TreePane>
                  {treeItems.map((t) => (
                    <TreeRow key={t.label} $indent={t.indent}>
                      {t.exp && <Expander>{t.exp}</Expander>}
                      {t.icon === "bin" ? <BinIcon /> : <FolderIcon />}
                      <TreeLabel $on={t.on}>{t.label}</TreeLabel>
                    </TreeRow>
                  ))}
                </TreePane>
                <Splitter />
                <ThumbPane>
                  <ThumbStub />
                  <SideGap $h={5} />
                  <ThumbCaption $indent={20}>tPORt - Shuriken</ThumbCaption>
                  <ThumbCaption $indent={37}>1.99crk.wav</ThumbCaption>
                  <ThumbShot $top={7} />
                  <SideGap $h={5} />
                  <ThumbCaption $indent={17}>VEGAS Solid Color</ThumbCaption>
                  <ThumbCard>
                    <div />
                    <p>y2mate.is - Windows</p>
                    <p>EARRAPE HIGH</p>
                  </ThumbCard>
                  <SelectedCaption>Offline Media File</SelectedCaption>
                </ThumbPane>
              </PanelBody>
              <TabStrip>
                <Tab $w={115} $on $label={64}>
                  <span>Project Media</span>
                  <Square size={11} strokeWidth={1.5} />
                  <X size={11} strokeWidth={3.5} />
                </Tab>
                <Tab $w={93} $pad={9}>Explorer</Tab>
                <Tab $w={100}>Hub Explorer</Tab>
              </TabStrip>
            </Panel>

            <Panel $w={335}>
              <Toolbar>
                <ToolSlot><FaCog size={15} /></ToolSlot>
                <ToolSlot><PinkTileIcon variant="a" /></ToolSlot>
                <ToolSlot><FxText>fx</FxText></ToolSlot>
                <ToolSlot><PropsIcon /></ToolSlot>
                <Caret $w={14} />
                <ToolText $w={80} $left={3}>Preview (Auto)</ToolText>
                <Caret $w={12} />
                <ToolSlot $w={24}>
                  <svg width="14" height="14" viewBox="0 0 14 14" fill="none" stroke="#eee">
                    <path d="M.500 0v14M4.500 0v14M9.500 0v14M13.500 0v14M0 .500h14M0 4.500h14M0 9.500h14M0 13.500h14" />
                  </svg>
                </ToolSlot>
                <Caret $w={14} />
                <ToolSlot $w={28}><Copy size={15} strokeWidth={2.5} color="#9ad" /></ToolSlot>
                <ToolSlot><FloppyIcon /></ToolSlot>
                <ToolSlot><RedRecordIcon /></ToolSlot>
              </Toolbar>
              <PreviewBody>
                <VideoArea />
                <InfoPanel>
                  <InfoTools>
                    <WhiteBlock />
                    <HamburgerIcon />
                  </InfoTools>
                  <InfoRow>
                    <InfoLabel>Frame:</InfoLabel>
                    <InfoValue>76</InfoValue>
                  </InfoRow>
                  <InfoRow>
                    <InfoLabel>Display:</InfoLabel>
                    <InfoValue $color="#d690a0">335x188x32</InfoValue>
                  </InfoRow>
                </InfoPanel>
              </PreviewBody>
              <TabStrip>
                <Tab $w={207} $on>Video Preview</Tab>
              </TabStrip>
            </Panel>

            <Panel $w={124}>
              <Toolbar>
                <ToolSlot><FaCog size={15} /></ToolSlot>
                <ToolSlot>
                  <svg width="15" height="12" viewBox="0 0 15 12" fill="#eee"><path d="M0 0l7 6-7 6zM15 0L8 6l7 6z" /></svg>
                </ToolSlot>
                <ToolSlot>
                  <svg width="15" height="12" viewBox="0 0 15 12" fill="#eee"><path d="M0 4h3l4-4v12L3 8H0z" /><path d="M10 2v6M8 7l2 3 2-3" stroke="#8fd0c0" strokeWidth="1.500" fill="none" /></svg>
                </ToolSlot>
                <ToolSlot>
                  <svg width="15" height="14" viewBox="0 0 15 14" fill="#eee"><path d="M1 0h2v14H1zM6 0h2v14H6zM11 0h2v14h-2z" /><path d="M0 8h4v2H0zM5 3h4v2H5zM10 7h4v2h-4z" /></svg>
                </ToolSlot>
              </Toolbar>
              <MixerBody>
                <MixerRow $h={16} $gap={8}>
                  <MasterSquare />
                  <span>Master</span>
                </MixerRow>
                <MixerRow $h={22} $gap={4}>
                  <FxText $w={13}>fx</FxText>
                  <FxBadge />
                  <MuteBadge />
                  <SoloBadge />
                </MixerRow>
                <StripRow>
                  <FaderCol>
                    <FaderTrack />
                    <FaderHandle>
                      <span />
                      <span />
                    </FaderHandle>
                    <LockSlot><FaLock size={8} /></LockSlot>
                  </FaderCol>
                  <MeterStrip>
                    {meterScale.map((n) => (
                      <MeterTick key={n}>- {n} -</MeterTick>
                    ))}
                  </MeterStrip>
                </StripRow>
                <PeakRow>
                  <span>0.0</span>
                  <span>0.0</span>
                </PeakRow>
              </MixerBody>
              <TabStrip>
                <Tab $w={98} $on $label={52}>
                  <span>Master Bus</span>
                  <Square size={10} strokeWidth={1.5} />
                  <X size={11} strokeWidth={3.5} />
                </Tab>
              </TabStrip>
            </Panel>
          </DockRow>

          <Timeline>
            <TrackList>
              <TimeHeader>00:00:02;16</TimeHeader>
              <TrackRow $h={63}>
                <TrackTab $color="#7f7a35">
                  <HamburgerIcon />
                  <TrackNo>
                    1
                    <FilmIcon />
                  </TrackNo>
                </TrackTab>
                <TrackMain>
                  <TrackBadges>
                    <MuteBadge size={15} />
                    <SoloBadge size={15} />
                  </TrackBadges>
                  <LevelRow>
                    Level: 100.0 %
                    <LevelLine />
                    <SliderKnob />
                  </LevelRow>
                </TrackMain>
              </TrackRow>
              <TrackRow $h={10}>
                <TrackTab $color="#3b8c80">
                  <HamburgerIcon />
                </TrackTab>
                <TrackMain>
                  <TrackBadges>
                    <MuteBadge size={15} />
                    <SoloBadge size={15} />
                    <RedChip>6.8</RedChip>
                  </TrackBadges>
                </TrackMain>
              </TrackRow>
              <RatePanel>
                Rate: 0.00
                <RateTrack>
                  <SliderKnob />
                </RateTrack>
              </RatePanel>
            </TrackList>
            <TrackView>
              <TrackViewTop>
                <TrackViewMain>
                  <MarkerBar />
                  <Ruler>
                    {rulerMarks.map(([label, w]) => (
                      <RulerMark key={label} $w={w}>{label}</RulerMark>
                    ))}
                  </Ruler>
                  <TrackLanes>
                    {rulerMarks.map(([label, w]) => (
                      <Lane key={label} $w={w} />
                    ))}
                  </TrackLanes>
                </TrackViewMain>
                <VScroll>
                  <VCell $h={17} $bg="#444"><NoteIcon size={12} fill="#ddd" /></VCell>
                  <VCell $h={16}><UpTri /></VCell>
                  <VCell $h={22} $top={2} $bg="#444"><ThumbGrip /></VCell>
                  <VCell $h={24} $pad="6px 0 0"><DownTri /></VCell>
                  <VCell $h={40} $bg="#444" $justify="space-between" $pad="3px 0 2px">
                    <Plus size={10} strokeWidth={3.5} />
                    <Minus size={10} strokeWidth={3.5} />
                  </VCell>
                </VScroll>
              </TrackViewTop>
              <HScroll>
                <RightTri />
                <HTools>
                  <Plus size={10} strokeWidth={3.5} />
                  <Minus size={10} strokeWidth={3.5} />
                  <Search size={11} strokeWidth={2} />
                </HTools>
              </HScroll>
              <BottomTools>
                <ToolSlot><SelectionIcon /></ToolSlot>
                <ToolSlot $w={27}><SelectionIcon zoom /></ToolSlot>
                <ToolSep $m={3.5} />
                <ToolSlot $color="#c06b78"><X size={18} strokeWidth={2} /></ToolSlot>
                {[0, 1, 2, 3, 4].map((k) => (
                  <ToolSlot key={k}><BracketIcon kind={k} /></ToolSlot>
                ))}
                <ToolSlot><FaLock size={14} /></ToolSlot>
                <ToolSep $m={3.5} />
                <ToolSlot><NoteIcon /></ToolSlot>
                <ToolSlot $w={6} $dim><WhiteBlock /></ToolSlot>
              </BottomTools>
            </TrackView>
          </Timeline>

          <StatusBar>
            <span>Complete: 00:13:56</span>
            <span>Record Time (2 channels): 99:12:30</span>
          </StatusBar>
        </Workspace>
      </VegasWin>

      <RenderWin $x={330} $y={157} $w={334} $h={509}>
        <RenderHead>Rendering: 100%</RenderHead>
        <RenderBody>
          <PathLine>C:\Users\vm6\Documents\Windows11EARRAPE SCANn.mp4</PathLine>
          <StatStack>
            {stats.map(([l, r]) => (
              <StatLine key={l}>
                <span>{l}</span>
                <span>{r}</span>
              </StatLine>
            ))}
          </StatStack>
          {sections.map((s) => (
            <Section key={s.title} $top={s.top}>
              <SectionHead>{s.title}</SectionHead>
              {s.rows.map(([l, r]) => (
                <PropRow key={l}>
                  <span>{l}</span>
                  <span>{r}</span>
                </PropRow>
              ))}
            </Section>
          ))}
          <Section $top={4}>
            <SectionHead>Options</SectionHead>
            <CheckRow>
              <CheckBox />
              Open folder when rendering is complete
            </CheckRow>
            <CheckRow>
              <CheckBox />
              Close dialog when rendering is complete
            </CheckRow>
          </Section>
          <ButtonRow>
            <RenderButton>Open Folder</RenderButton>
            <RenderButton>Open</RenderButton>
            <RenderButton>Close</RenderButton>
          </ButtonRow>
        </RenderBody>
      </RenderWin>

      <CursorMark>
        <CursorBusy />
      </CursorMark>

      <Taskbar $x={0} $y={720} $w={1024} $h={48}>
        <TaskSlot><WindowsLogo /></TaskSlot>
        <TaskSlot><Search size={25} strokeWidth={2.4} /></TaskSlot>
        <TaskSlot $mark><ExplorerTaskIcon /></TaskSlot>
        <TaskSlot $on $mark><VegasLogo size={23} /></TaskSlot>
        <TaskSlot $mark><FirefoxIcon size={25} /></TaskSlot>
        <Tray>
          <TraySlot $w={26}><ChevronUp size={18} strokeWidth={2} /></TraySlot>
          <TraySlot $w={36}>
            <svg width="17" height="14" viewBox="0 0 17 14">
              <path d="M4 13a3.500 3.500 0 0 1-.5-7A5 5 0 0 1 13 4.500 4 4 0 0 1 13 13z" fill="#777" />
              <path d="M2 1l13 13" stroke="#ddd" strokeWidth="1.200" />
            </svg>
          </TraySlot>
          <TraySlot $w={30}>
            <svg width="17" height="17" viewBox="0 0 17 17" fill="none" stroke="#eee">
              <rect x=".500" y="2.500" width="11" height="10" />
              <path d="M3 15.500h8M6 13v2" />
              <rect x="12.500" y=".500" width="4" height="11" fill="#1c1c1c" />
              <path d="M13 3h3" />
            </svg>
          </TraySlot>
          <TraySlot $w={22}>
            <svg width="17" height="17" viewBox="0 0 17 17" fill="none" stroke="#eee">
              <path d="M1 6h3l4-4v11L4 10H1z" />
              <circle cx="12" cy="11" r="4.500" fill="#eee" />
              <path d="M10 9l4 4M14 9l-4 4" stroke="#222" strokeWidth="1.200" />
            </svg>
          </TraySlot>
          <Clock>
            <div>12:22 AM</div>
            <div>2/17/2024</div>
          </Clock>
          <TraySlot $w={32}><Bell size={15} strokeWidth={1.3} /></TraySlot>
        </Tray>
      </Taskbar>
    </Desktop>
  );
};

export default App;
